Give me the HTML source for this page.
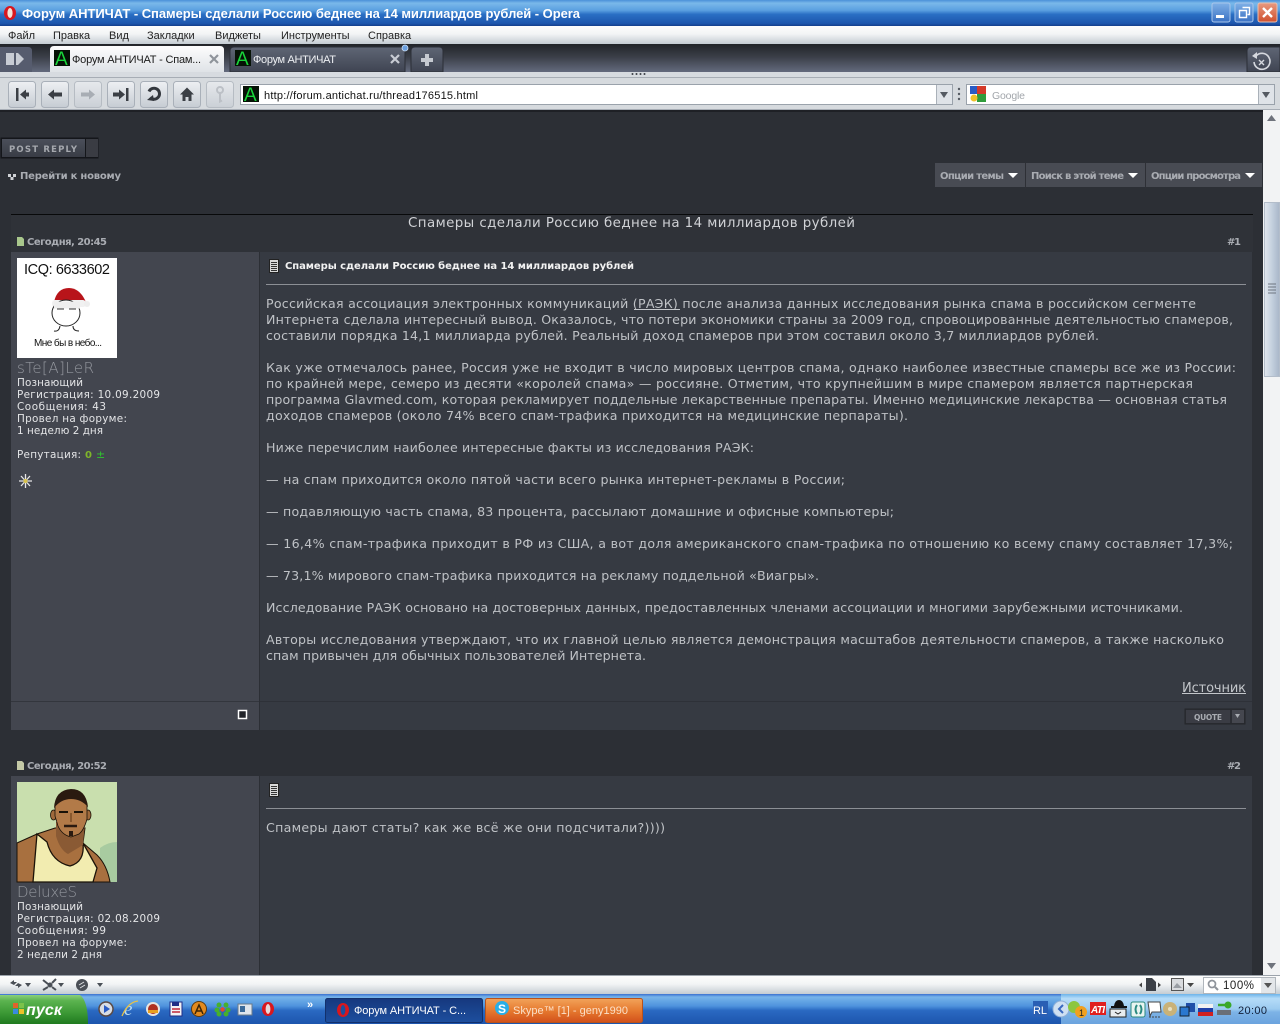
<!DOCTYPE html>
<html lang="ru"><head><meta charset="utf-8"><title>Форум АНТИЧАТ - Спамеры сделали Россию беднее на 14 миллиардов рублей - Opera</title>
<style>
html,body{margin:0;padding:0;width:1280px;height:1024px;overflow:hidden;background:#2c2f35}
svg{display:block}
text{white-space:pre}
.s{font-family:"Liberation Sans",sans-serif}
.b{font-family:"DejaVu Sans",sans-serif;font-size:12.6px;fill:#bfc2c6}
.u{font-family:"DejaVu Sans",sans-serif;font-size:10.4px;fill:#e4e5e7}
.h{font-family:"DejaVu Sans",sans-serif;font-size:10px;font-weight:bold;fill:#a9acb2}
</style></head><body>
<svg width="1280" height="1024" viewBox="0 0 1280 1024" xmlns="http://www.w3.org/2000/svg">
<defs>
<linearGradient id="tb" x1="0" y1="0" x2="0" y2="1"><stop offset="0" stop-color="#4a90d8"/><stop offset=".12" stop-color="#7ab8ea"/><stop offset=".4" stop-color="#5a9fe0"/><stop offset=".55" stop-color="#2a6fc4"/><stop offset=".9" stop-color="#1d56ad"/><stop offset="1" stop-color="#143f8c"/></linearGradient>
<linearGradient id="mb" x1="0" y1="0" x2="0" y2="1"><stop offset="0" stop-color="#fdfdfd"/><stop offset=".45" stop-color="#f2f4f5"/><stop offset="1" stop-color="#c4ccd2"/></linearGradient>
<linearGradient id="tab" x1="0" y1="0" x2="0" y2="1"><stop offset="0" stop-color="#212429"/><stop offset=".45" stop-color="#3a3e47"/><stop offset="1" stop-color="#636a7d"/></linearGradient>
<linearGradient id="t1" x1="0" y1="0" x2="0" y2="1"><stop offset="0" stop-color="#fdfdfd"/><stop offset="1" stop-color="#dfe3e7"/></linearGradient>
<linearGradient id="t2" x1="0" y1="0" x2="0" y2="1"><stop offset="0" stop-color="#5f6675"/><stop offset="1" stop-color="#3f4452"/></linearGradient>
<linearGradient id="btn" x1="0" y1="0" x2="0" y2="1"><stop offset="0" stop-color="#eef0f3"/><stop offset="1" stop-color="#c6ccd3"/></linearGradient>
<linearGradient id="task" x1="0" y1="0" x2="0" y2="1"><stop offset="0" stop-color="#3a71cf"/><stop offset=".1" stop-color="#76b4ea"/><stop offset=".4" stop-color="#4f93dd"/><stop offset=".55" stop-color="#2a69c2"/><stop offset="1" stop-color="#1d55ad"/></linearGradient>
<linearGradient id="tray" x1="0" y1="0" x2="0" y2="1"><stop offset="0" stop-color="#6db3ea"/><stop offset=".15" stop-color="#b5dcf8"/><stop offset=".5" stop-color="#9ccbf0"/><stop offset=".6" stop-color="#7db3e6"/><stop offset="1" stop-color="#6ba3de"/></linearGradient>
<linearGradient id="start" x1="0" y1="0" x2="0" y2="1"><stop offset="0" stop-color="#8bd07a"/><stop offset=".2" stop-color="#5bb34f"/><stop offset=".6" stop-color="#3d9a36"/><stop offset="1" stop-color="#1f7a1f"/></linearGradient>
<linearGradient id="skype" x1="0" y1="0" x2="0" y2="1"><stop offset="0" stop-color="#f2a35a"/><stop offset=".5" stop-color="#e67a30"/><stop offset="1" stop-color="#d2501a"/></linearGradient>
<linearGradient id="opb" x1="0" y1="0" x2="0" y2="1"><stop offset="0" stop-color="#16387e"/><stop offset="1" stop-color="#1d4f9e"/></linearGradient>
<linearGradient id="sb" x1="0" y1="0" x2="1" y2="0"><stop offset="0" stop-color="#e2e7ee"/><stop offset=".5" stop-color="#c4d0de"/><stop offset="1" stop-color="#a8b6c8"/></linearGradient>
<linearGradient id="win" x1="0" y1="0" x2="0" y2="1"><stop offset="0" stop-color="#7fb0e6"/><stop offset="1" stop-color="#3a71c4"/></linearGradient>
<linearGradient id="cls" x1="0" y1="0" x2="0" y2="1"><stop offset="0" stop-color="#e89a80"/><stop offset="1" stop-color="#d0502e"/></linearGradient>
<linearGradient id="rep" x1="0" y1="0" x2="0" y2="1"><stop offset="0" stop-color="#4b4f5a"/><stop offset="1" stop-color="#393c45"/></linearGradient>
</defs>

<!-- page -->
<rect x="0" y="110" width="1263" height="866" fill="#2c2f35"/>
<rect x="0" y="110" width="1263" height="2" fill="#1e2025"/>

<!-- title bar -->
<rect width="1280" height="26" fill="url(#tb)"/>
<ellipse cx="10" cy="13" rx="6" ry="7" fill="#d8171e"/><ellipse cx="10" cy="13" rx="2.600" ry="5" fill="#f3e3d8"/>
<text class="s" x="22" y="18" font-size="13" font-weight="bold" fill="#fff" textLength="558">Форум АНТИЧАТ - Спамеры сделали Россию беднее на 14 миллиардов рублей - Opera</text>
<rect x="1212" y="3" width="18" height="19" rx="2" fill="url(#win)" stroke="#a9c6ea"/><rect x="1216" y="15" width="8" height="3" fill="#fff"/>
<rect x="1235" y="3" width="18" height="19" rx="2" fill="url(#win)" stroke="#a9c6ea"/><path d="M1242.500 7.500h7v7h-2M1239.500 10.500h7v7h-7z" fill="none" stroke="#fff" stroke-width="1.400"/>
<rect x="1258" y="3" width="19" height="19" rx="2" fill="url(#cls)" stroke="#e8c0b0"/><path d="M1263 8l9 9M1272 8l-9 9" stroke="#fff" stroke-width="2.400"/>

<!-- menu -->
<rect y="26" width="1280" height="18" fill="url(#mb)"/>
<g class="s" font-size="11" fill="#222">
<text x="8" y="39">Файл</text><text x="53" y="39">Правка</text><text x="109" y="39">Вид</text><text x="147" y="39">Закладки</text><text x="215" y="39">Виджеты</text><text x="281" y="39">Инструменты</text><text x="368" y="39">Справка</text>
</g>

<!-- tabs -->
<rect y="44" width="1280" height="28" fill="url(#tab)"/>
<path d="M0 47h28q4 0 4 4v21H0z" fill="#565c6e"/><rect x="6" y="53" width="8" height="12" fill="#c8ccd4"/><path d="M16 53h2l6 6-6 6h-2z" fill="#c8ccd4"/>
<path d="M50 72V50q0-4 4-4h166q4 0 4 4v22z" fill="url(#t1)"/>
<rect x="54" y="50" width="16" height="16" fill="#061206"/><text class="s" x="55" y="65" font-size="19" fill="#19d53a">A</text>
<text class="s" x="72" y="63" font-size="11" fill="#1a1a1a" textLength="129">Форум АНТИЧАТ - Спам...</text>
<path d="M210 55l8 8M218 55l-8 8" stroke="#8f949b" stroke-width="2.200"/>
<path d="M230 72V51q0-4 4-4h167q4 0 4 4v21z" fill="url(#t2)" stroke="#2b2e36"/>
<rect x="235" y="50" width="16" height="16" fill="#061206"/><text class="s" x="236" y="65" font-size="19" fill="#19d53a">A</text>
<text class="s" x="253" y="63" font-size="11" fill="#eef0f3" textLength="83">Форум АНТИЧАТ</text>
<path d="M391 55l8 8M399 55l-8 8" stroke="#c8ccd4" stroke-width="2.200"/>
<circle cx="405" cy="48" r="3" fill="#6aa0e0" stroke="#cfe0f5" stroke-width=".8"/>
<path d="M411 72V51q0-4 4-4h24q4 0 4 4v21z" fill="url(#t2)" stroke="#2b2e36"/>
<path d="M425 54h4v4h4v4h-4v4h-4v-4h-4v-4h4z" fill="#c5c9d0"/>
<path d="M1247 72V51q0-4 4-4h29v25z" fill="url(#t2)" stroke="#2b2e36"/>
<path d="M1256 56a8 8 0 1 1-2 6" fill="none" stroke="#d5d8de" stroke-width="1.600"/><path d="M1252 56l5-4v7z" fill="#d5d8de"/><path d="M1259 60l5 5M1264 60l-5 5" stroke="#d5d8de" stroke-width="1.400"/>

<!-- strip & address bar -->
<rect y="72" width="1280" height="5" fill="#d7dbe0"/>
<rect y="77" width="1280" height="1" fill="#a7adb5"/>
<rect y="78" width="1280" height="32" fill="#d6dade"/>
<rect y="109" width="1280" height="1" fill="#a7adb5"/>
<g fill="#3a3e44"><circle cx="632.500" cy="74" r="1"/><circle cx="636.500" cy="74" r="1"/><circle cx="640.500" cy="74" r="1"/><circle cx="644.500" cy="74" r="1"/></g>

<g fill="url(#btn)" stroke="#a9b0b9">
<rect x="8.500" y="81.500" width="27" height="26" rx="3"/><rect x="41.500" y="81.500" width="27" height="26" rx="3"/><rect x="74.500" y="81.500" width="27" height="26" rx="3" opacity=".7"/><rect x="107.500" y="81.500" width="27" height="26" rx="3"/><rect x="140.500" y="81.500" width="27" height="26" rx="3"/><rect x="173.500" y="81.500" width="27" height="26" rx="3"/><rect x="206.500" y="81.500" width="27" height="26" rx="3" opacity=".7"/>
</g>
<g fill="#3b3f45">
<path d="M16 88h2.500v13H16zM20 94.500l6-5v3h3v4h-3v3z"/>
<path d="M48 94.500l6-5v3h8v4h-8v3z"/>
<path d="M95 94.500l-6-5v3h-8v4h8v3z" fill="#a8adb4"/>
<path d="M113 92.500h6v-3l6 5-6 5v-3h-6zM126 88h2.500v13H126z"/>
<path d="M180 94.500l7-7 7 7h-2.500v6.500h-3v-4h-3v4h-3v-6.500z"/>
</g>
<path d="M149 91.500a5.500 5.500 0 1 1 1 6" fill="none" stroke="#33373d" stroke-width="3"/><path d="M147 100l6-5 1 6z" fill="#33373d"/>
<circle cx="220" cy="90" r="3" fill="none" stroke="#bcc0c6" stroke-width="2"/><path d="M220 93.500v8l2-1" fill="none" stroke="#bcc0c6" stroke-width="2"/>

<rect x="240.500" y="84.500" width="712" height="20" fill="#fff" stroke="#9aa2ab"/>
<rect x="243" y="86" width="16" height="16" fill="#061206"/><text class="s" x="244" y="101" font-size="19" fill="#19d53a">A</text>
<text class="s" x="264" y="99" font-size="11" fill="#111" textLength="214">http://forum.antichat.ru/thread176515.html</text>
<rect x="936" y="85" width="16" height="19" fill="#dfe3e8"/><rect x="936" y="85" width="1" height="19" fill="#aab1b9"/><path d="M940 92h8l-4 6z" fill="#555a62"/>
<g fill="#555a62"><circle cx="959" cy="89" r="1.200"/><circle cx="959" cy="94" r="1.200"/><circle cx="959" cy="99" r="1.200"/></g>
<rect x="966.500" y="84.500" width="308" height="20" fill="#fff" stroke="#9aa2ab"/>
<rect x="970" y="86" width="7" height="8" fill="#2a5bc4"/><rect x="977" y="86" width="9" height="8" fill="#d43a2a"/><rect x="977" y="94" width="9" height="8" fill="#2f9c3c"/><circle cx="974" cy="98" r="3.500" fill="#efc02a"/>
<text class="s" x="992" y="99" font-size="10.500" fill="#a2a6ab" textLength="33">Google</text>
<rect x="1258" y="85" width="16" height="19" fill="#dfe3e8"/><rect x="1258" y="85" width="1" height="19" fill="#aab1b9"/><path d="M1262 92h8l-4 6z" fill="#555a62"/>

<!-- scrollbar -->
<rect x="1263" y="110" width="17" height="866" fill="#f2f3f4"/>
<path d="M1267 121l4.500-6 4.500 6z" fill="#6f737c"/>
<rect x="1264.500" y="202.500" width="15" height="174" fill="url(#sb)" stroke="#b3bdca"/>
<path d="M1268 284h8M1268 287h8M1268 290h8M1268 293h8" stroke="#6d7580"/>
<path d="M1267 963l4.500 6 4.500-6z" fill="#6f737c"/>

<!-- post reply -->
<rect x="0.500" y="137.500" width="98" height="21" fill="#14161a"/>
<rect x="2" y="139" width="83" height="18" fill="url(#rep)"/>
<rect x="86" y="139" width="12" height="18" fill="#3a3c43"/>
<text x="9" y="152" font-family="DejaVu Sans" font-size="8.500" font-weight="bold" fill="#a5a8ae" textLength="68">POST REPLY</text>
<path d="M8 174h3v3H8zM13 174h3v3h-3zM10.500 177h3v3h-3z" fill="#d0d2d6"/>
<text class="h" x="20" y="179" textLength="101">Перейти к новому</text>

<!-- option menus -->
<rect x="935" y="163" width="327" height="24" fill="#484b53"/>
<rect x="1025" y="163" width="1" height="26" fill="#2e3036"/><rect x="1145" y="163" width="1" height="26" fill="#2e3036"/>
<text class="h" x="940" y="179" textLength="64">Опции темы</text>
<text class="h" x="1031" y="179" textLength="93">Поиск в этой теме</text>
<text class="h" x="1151" y="179" textLength="90">Опции просмотра</text>
<g fill="#fff"><path d="M1008 173h10l-5 5zM1128 173h10l-5 5zM1245 173h10l-5 5z"/></g>

<!-- thread title -->
<rect x="11" y="214" width="1242" height="1" fill="#08090a"/>
<rect x="11" y="215" width="1242" height="37" fill="#2f3238"/>
<text x="408" y="227" font-family="DejaVu Sans" font-size="13.400" fill="#d0d2d6" textLength="447">Спамеры сделали Россию беднее на 14 миллиардов рублей</text>

<!-- POST 1 -->
<path d="M17 237h5l2 2v7h-7z" fill="#a9c78c"/>
<text class="h" x="27" y="245" textLength="80">Сегодня, 20:45</text>
<text class="h" x="1227" y="245" textLength="14">#1</text>
<rect x="11" y="252" width="248" height="478" fill="#43464f"/>
<rect x="260" y="252" width="992" height="478" fill="#363a42"/>
<rect x="11" y="701" width="248" height="1" fill="#33363d"/><rect x="260" y="701" width="992" height="1" fill="#2e3138"/>

<!-- avatar 1 -->
<rect x="17" y="258" width="100" height="100" fill="#fff"/>
<text class="s" x="24" y="274" font-size="14.500" fill="#111" textLength="86">ICQ: 6633602</text>
<path d="M54 302q3-14 15-14 10 0 16 12l2 6-31 0z" fill="#b8141a"/>
<rect x="52" y="300" width="34" height="7" rx="3" fill="#f1f1f1"/><circle cx="87" cy="304" r="3" fill="#eee"/>
<ellipse cx="66" cy="313" rx="14" ry="13" fill="#fff" stroke="#222"/>
<path d="M54 305h26" stroke="#eee" stroke-width="7"/>
<path d="M57 309h7M69 309h7" stroke="#333"/>
<path d="M60 326q-1 6-6 5M73 326q0 5 6 5" fill="none" stroke="#222"/>
<text class="s" x="34" y="346" font-size="10" fill="#111" textLength="68">Мне бы в небо...</text>

<text x="17" y="373" font-family="DejaVu Sans" font-size="15" font-weight="200" fill="#95989f" textLength="77">sTe[A]LeR</text>
<text class="u" x="17" y="386" textLength="66">Познающий</text>
<text class="u" x="17" y="398" textLength="143">Регистрация: 10.09.2009</text>
<text class="u" x="17" y="410" textLength="89">Сообщения: 43</text>
<text class="u" x="17" y="422" textLength="110">Провел на форуме:</text>
<text class="u" x="17" y="434" textLength="86">1 неделю 2 дня</text>
<text class="u" x="17" y="458" textLength="64">Репутация:</text>
<text x="85" y="458" font-family="DejaVu Sans" font-size="10" font-weight="bold" fill="#7fb52a">0</text>
<text x="96" y="458" font-family="DejaVu Sans" font-size="11" fill="#2fc62f">±</text>
<g stroke="#e6e6e6" stroke-width="1.300"><path d="M25.500 474v14M19 481h13M21 476l9 10M30 476l-9 10"/></g><circle cx="25.500" cy="481" r="2" fill="#d8c14a"/>

<!-- post 1 head -->
<rect x="269.500" y="259.500" width="9" height="13" fill="#d9d9d9" stroke="#222"/><path d="M271 262.500h6M271 264.500h6M271 266.500h6M271 268.500h6M271 270.500h6" stroke="#333"/>
<text x="285" y="269" font-family="DejaVu Sans" font-size="10" font-weight="bold" fill="#f2f2f2" textLength="349">Спамеры сделали Россию беднее на 14 миллиардов рублей</text>
<rect x="266" y="284" width="980" height="1" fill="#8c8f95"/>

<g>
<text class="b" x="266" y="308" textLength="930">Российская ассоциация электронных коммуникаций (РАЭК) после анализа данных исследования рынка спама в российском сегменте</text>
<rect x="634" y="309" width="46" height="1" fill="#c3c6ca"/>
<text class="b" x="266" y="324" textLength="967">Интернета сделала интересный вывод. Оказалось, что потери экономики страны за 2009 год, спровоцированные деятельностью спамеров,</text>
<text class="b" x="266" y="340" textLength="833">составили порядка 14,1 миллиарда рублей. Реальный доход спамеров при этом составил около 3,7 миллиардов рублей.</text>
<text class="b" x="266" y="372" textLength="970">Как уже отмечалось ранее, Россия уже не входит в число мировых центров спама, однако наиболее известные спамеры все же из России:</text>
<text class="b" x="266" y="388" textLength="927">по крайней мере, семеро из десяти «королей спама» — россияне. Отметим, что крупнейшим в мире спамером является партнерская</text>
<text class="b" x="266" y="404" textLength="961">программа Glavmed.com, которая рекламирует поддельные лекарственные препараты. Именно медицинские лекарства — основная статья</text>
<text class="b" x="266" y="420" textLength="642">доходов спамеров (около 74% всего спам-трафика приходится на медицинские перпараты).</text>
<text class="b" x="266" y="452" textLength="488">Ниже перечислим наиболее интересные факты из исследования РАЭК:</text>
<text class="b" x="266" y="484" textLength="579">— на спам приходится около пятой части всего рынка интернет-рекламы в России;</text>
<text class="b" x="266" y="516" textLength="628">— подавляющую часть спама, 83 процента, рассылают домашние и офисные компьютеры;</text>
<text class="b" x="266" y="548" textLength="967">— 16,4% спам-трафика приходит в РФ из США, а вот доля американского спам-трафика по отношению ко всему спаму составляет 17,3%;</text>
<text class="b" x="266" y="580" textLength="553">— 73,1% мирового спам-трафика приходится на рекламу поддельной «Виагры».</text>
<text class="b" x="266" y="612" textLength="917">Исследование РАЭК основано на достоверных данных, предоставленных членами ассоциации и многими зарубежными источниками.</text>
<text class="b" x="266" y="644" textLength="958">Авторы исследования утверждают, что их главной целью является демонстрация масштабов деятельности спамеров, а также насколько</text>
<text class="b" x="266" y="660" textLength="380">спам привычен для обычных пользователей Интернета.</text>
</g>
<text x="1182" y="692" font-family="DejaVu Sans" font-size="13" fill="#c3c6ca" textLength="64">Источник</text>
<rect x="1182" y="693" width="64" height="1" fill="#c3c6ca"/>

<rect x="238.500" y="710.500" width="8" height="8" fill="#22242a" stroke="#fff" stroke-width="1.500"/>
<rect x="1185" y="709" width="60" height="15" fill="#2b2d33" stroke="#24262b"/>
<rect x="1186" y="710" width="44" height="13" fill="#3a3c44"/><rect x="1232" y="710" width="12" height="13" fill="#45474f"/>
<text x="1194" y="720" font-family="DejaVu Sans" font-size="7.500" font-weight="bold" fill="#a9acb2" textLength="28">QUOTE</text>
<path d="M1235 714h5l-2.500 4z" fill="#a9acb2"/>

<!-- POST 2 -->
<path d="M17 761h5l2 2v7h-7z" fill="#c4c9a6"/>
<text class="h" x="27" y="769" textLength="80">Сегодня, 20:52</text>
<text class="h" x="1227" y="769" textLength="14">#2</text>
<rect x="11" y="776" width="248" height="200" fill="#43464f"/>
<rect x="260" y="776" width="992" height="200" fill="#363a42"/>

<!-- avatar 2 -->
<rect x="17" y="782" width="100" height="100" fill="#c9dfae"/>
<path d="M100 848q8-6 17-6v40h-17z" fill="#a8cba0"/>
<path d="M17 882V843l20-9 18-6h30l-2 15 14 12q10 10 13 27z" fill="#a8703f" stroke="#1a1208" stroke-width="1"/>
<path d="M37 834l-4 48h60l4-14-14-25q2 19-13 23-18-4-23-24z" fill="#f2ecb0" stroke="#1a1208" stroke-width="1.300"/>
<path d="M56 822v14q4 14 12 18l15-9 2-23z" fill="#8a5a34"/>
<ellipse cx="53.500" cy="815" rx="3" ry="5" fill="#a06a3c" stroke="#1a1208" stroke-width=".8"/><ellipse cx="88" cy="815" rx="3" ry="5" fill="#a06a3c" stroke="#1a1208" stroke-width=".8"/>
<path d="M55 805q2-14 16-15 14 1 16 15l0 14q-3 11-8 15l-8 3q-9-2-13-11l-3-10z" fill="#b27a48" stroke="#1a1208" stroke-width=".8"/>
<path d="M54 808q1-18 17-19 15 0 17 18-7-8-17-8-10 0-17 9z" fill="#2a1a10"/>
<path d="M59 812h9M74 812h9" stroke="#1a1208" stroke-width="2"/><path d="M71 813v9" stroke="#7a4c26" stroke-width="1.500"/><path d="M64 826h13" stroke="#2a1a10" stroke-width="2.500"/><path d="M69 831h4v5h-4z" fill="#2a1a10"/>

<text x="17" y="897" font-family="DejaVu Sans" font-size="15" font-weight="200" fill="#95989f" textLength="60">DeluxeS</text>
<text class="u" x="17" y="910" textLength="66">Познающий</text>
<text class="u" x="17" y="922" textLength="143">Регистрация: 02.08.2009</text>
<text class="u" x="17" y="934" textLength="89">Сообщения: 99</text>
<text class="u" x="17" y="946" textLength="110">Провел на форуме:</text>
<text class="u" x="17" y="958" textLength="85">2 недели 2 дня</text>

<rect x="269.500" y="783.500" width="9" height="13" fill="#d9d9d9" stroke="#222"/><path d="M271 786.500h6M271 788.500h6M271 790.500h6M271 792.500h6M271 794.500h6" stroke="#333"/>
<rect x="266" y="808" width="980" height="1" fill="#8c8f95"/>
<text class="b" x="266" y="832" textLength="399">Спамеры дают статы? как же всё же они подсчитали?))))</text>

<!-- status bar -->
<rect y="975" width="1280" height="1" fill="#9ca3ab"/>
<rect y="976" width="1280" height="18" fill="url(#mb)"/>
<g fill="#4a4f56">
<path d="M10 983l4-3v2h3l-3 3zM22 985l-4 3v-2h-3l3-3zM25 983h6l-3 4zM58 983h6l-3 4zM97 983h6l-3 4z"/>
<circle cx="50" cy="985" r="2.500"/><path d="M43 980l5 4M43 990l5-3M56 979l-4 4M56 990l-4-3" stroke="#4a4f56" stroke-width="2"/>
<circle cx="82" cy="985" r="6"/>
</g>
<path d="M79 985l5-3M80 988l5-3" stroke="#e0e2e5"/>
<path d="M1139 985l3-2.500v5zM1158 982.500v5l3-2.500z" fill="#444"/>
<path d="M1146 978h6l4 4v9h-10z" fill="#3c4047"/>
<rect x="1171.500" y="978.500" width="12" height="12" fill="#d9dbde" stroke="#555"/><path d="M1173 988l4-5 5 5z" fill="#9a9ea4"/>
<path d="M1187 983h7l-3.500 4z" fill="#444"/>
<rect x="1203.500" y="977.500" width="72" height="16" fill="#fff" stroke="#b0b6bc"/>
<circle cx="1212" cy="984" r="3.500" fill="none" stroke="#8f949b" stroke-width="1.700"/><path d="M1215 987l3 3" stroke="#8f949b" stroke-width="2"/>
<text class="s" x="1223" y="989" font-size="11.500" fill="#222" textLength="31">100%</text>
<rect x="1261" y="978" width="14" height="15" fill="#e3e6e9"/><path d="M1264 983h8l-4 5z" fill="#555"/>

<!-- taskbar -->
<rect y="994" width="1280" height="30" fill="url(#task)"/>
<rect x="1061" y="994" width="219" height="30" fill="url(#tray)"/>
<path d="M0 995h80q8 6 8 29H0z" fill="url(#start)"/>
<g><rect x="13" y="1003" width="5" height="5" fill="#e0632a"/><rect x="19" y="1003" width="5" height="5" fill="#7cc24a"/><rect x="13" y="1009" width="5" height="5" fill="#3a8ae0"/><rect x="19" y="1009" width="5" height="5" fill="#ecc22a"/></g>
<text x="26" y="1015" font-family="Liberation Sans" font-size="16" font-weight="bold" font-style="italic" fill="#fff" textLength="36">пуск</text>

<circle cx="106" cy="1009" r="7" fill="#d8dde4" stroke="#5b4a44" stroke-width="1.500"/><path d="M104 1005l6 4-6 4z" fill="#2a5bc4"/>
<text x="124" y="1015" font-family="Liberation Serif" font-size="19" font-style="italic" fill="#b8dcf5">e</text>
<path d="M122 1016q6-14 16-15" fill="none" stroke="#e6c24a" stroke-width="1.300"/>
<circle cx="153" cy="1009" r="7" fill="#e8e4df"/><circle cx="153" cy="1009" r="5" fill="#b03020"/><path d="M148 1010h10v3h-10z" fill="#e8a020"/>
<rect x="170" y="1002" width="12" height="14" fill="#f2f2f5" stroke="#1f2d86"/><rect x="172" y="1002" width="7" height="4" fill="#1f2d86"/><path d="M172 1009h8M172 1012h8" stroke="#c0283a" stroke-width="1.500"/>
<circle cx="199" cy="1009" r="7.500" fill="#e28a20" stroke="#5a3a10"/><path d="M195 1014l4-9 4 9M197 1011h4" fill="none" stroke="#3a2408" stroke-width="1.500"/>
<g fill="#47b02c"><circle cx="219" cy="1005" r="2.500"/><circle cx="226" cy="1005" r="2.500"/><circle cx="217" cy="1010" r="2.500"/><circle cx="228" cy="1010" r="2.500"/><circle cx="219" cy="1014" r="2.500"/><circle cx="226" cy="1014" r="2.500"/></g><circle cx="222.500" cy="1009.500" r="2.200" fill="#e84a2a"/>
<rect x="238" y="1004" width="14" height="11" fill="#dfe5ec" stroke="#6a7a8a"/><rect x="240" y="1006" width="5" height="6" fill="#3a6a9a"/>
<ellipse cx="268" cy="1009" rx="6" ry="7" fill="#d8171e"/><ellipse cx="268" cy="1009" rx="2.400" ry="5" fill="#e8d8d8"/>
<text class="s" x="307" y="1008" font-size="11" font-weight="bold" fill="#fff">»</text>

<rect x="325.500" y="998.500" width="157" height="24" rx="2" fill="url(#opb)" stroke="#12306c"/>
<ellipse cx="343" cy="1010" rx="6" ry="7" fill="#d8171e"/><ellipse cx="343" cy="1010" rx="2.400" ry="5" fill="#1d4f9e"/>
<text class="s" x="354" y="1014" font-size="11" fill="#fff" textLength="112">Форум АНТИЧАТ - С...</text>
<rect x="485.500" y="998.500" width="157" height="24" rx="2" fill="url(#skype)" stroke="#b8521c"/>
<circle cx="502" cy="1008" r="7" fill="#29aee6"/><text class="s" x="498" y="1013" font-size="12" font-weight="bold" fill="#fff">S</text>
<text class="s" x="513" y="1014" font-size="11" fill="#fbe0c8" textLength="115">Skype™ [1] - geny1990</text>

<!-- tray -->
<rect x="1033" y="1001" width="15" height="16" fill="#2a5fb4"/>
<text class="s" x="1033" y="1014" font-size="11" fill="#fff" textLength="14">RL</text>
<circle cx="1061" cy="1009" r="8" fill="#cfe0f2" stroke="#8fb0d8"/><path d="M1063 1005l-4 4 4 4" fill="none" stroke="#3a6ac0" stroke-width="2"/>
<circle cx="1074" cy="1007" r="6" fill="#8cc63f"/><circle cx="1081" cy="1012" r="6" fill="#f0a020"/><text class="s" x="1079" y="1016" font-size="9" fill="#222">1</text>
<rect x="1090" y="1002" width="16" height="13" fill="#e01f1f"/><text class="s" x="1091" y="1013" font-size="10" font-weight="bold" font-style="italic" fill="#fff" textLength="14">ATI</text>
<path d="M1114 1006q1-6 5-6t5 6h3v2h-16v-2z" fill="#111"/><rect x="1110" y="1009" width="16" height="8" fill="#e8ecef" stroke="#222"/><path d="M1115 1012l3 2 3-2" fill="none" stroke="#222"/>
<rect x="1131" y="1002" width="14" height="15" rx="2" fill="#e8f4f0" stroke="#2a8a80"/><path d="M1137 1005q-3 4 0 9M1140 1005q3 4 0 9" fill="none" stroke="#2a8a80" stroke-width="2"/>
<path d="M1148 1002h12l1 10h-9l-2 4z" fill="#fff" stroke="#444"/><path d="M1149 1017h11" stroke="#444" stroke-dasharray="2 1"/>
<circle cx="1170" cy="1009" r="7" fill="#c9b278"/><circle cx="1170" cy="1009" r="2" fill="#e8e0c0"/>
<rect x="1186" y="1003" width="9" height="9" fill="#1f4fa8"/><rect x="1180" y="1007" width="9" height="9" fill="#2a78d0" stroke="#123"/>
<rect x="1198" y="1004" width="15" height="4" fill="#f1f1f1"/><rect x="1198" y="1008" width="15" height="4" fill="#2040a8"/><rect x="1198" y="1012" width="15" height="4" fill="#d02020"/>
<circle cx="1228" cy="1005" r="3.500" fill="#3aa82a"/><path d="M1218 1005h8" stroke="#3aa82a" stroke-width="2.500"/><path d="M1217 1010h14v5h-14z" fill="#6a6f78"/>
<text class="s" x="1238" y="1014" font-size="11" fill="#12203a" textLength="29">20:00</text>
</svg>
</body></html>
